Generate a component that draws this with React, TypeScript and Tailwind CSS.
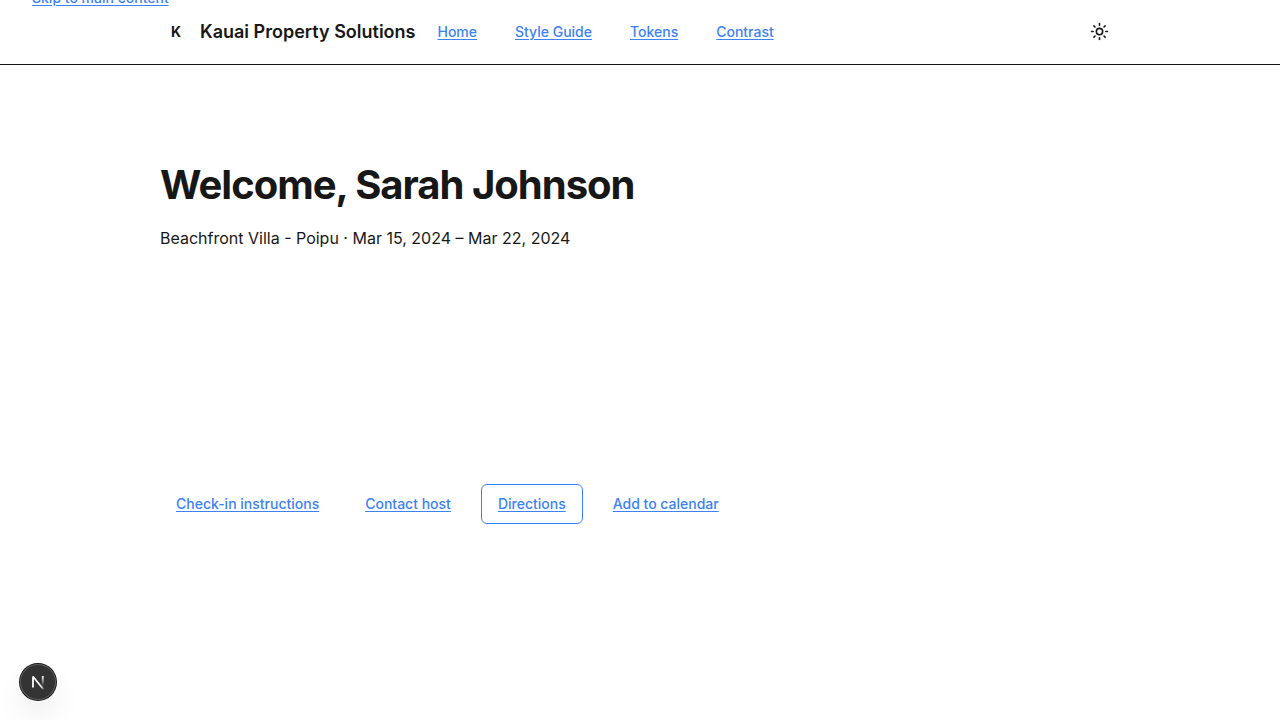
import { Sun } from "lucide-react";

const navLinks = ["Home", "Style Guide", "Tokens", "Contrast"];

const actions = [
  { label: "Check-in instructions", outlined: false },
  { label: "Contact host", outlined: false },
  { label: "Directions", outlined: true },
  { label: "Add to calendar", outlined: false },
];

function DevBadge() {
  return (
    <button
      type="button"
      aria-label="Open Next.js Dev Tools"
      className="fixed bottom-5 left-5 flex size-9 items-center justify-center rounded-full bg-[#333333] shadow-[0_0_0_1px_#171717,inset_0_0_0_1px_#5c5c5c,0_16px_32px_-8px_rgba(0,0,0,0.24)]"
    >
      <svg width="40" height="40" viewBox="0 0 40 40" fill="none" className="shrink-0">
        <defs>
          <linearGradient id="diagonal" x1="21" y1="21" x2="26" y2="28" gradientUnits="userSpaceOnUse">
            <stop stopColor="white" />
            <stop offset="0.6" stopColor="white" stopOpacity="0.8" />
            <stop offset="1" stopColor="white" stopOpacity="0" />
          </linearGradient>
          <linearGradient id="stem" x1="25" y1="14" x2="25" y2="24" gradientUnits="userSpaceOnUse">
            <stop stopColor="white" />
            <stop offset="1" stopColor="white" stopOpacity="0" />
          </linearGradient>
        </defs>
        <path d="M15 14.5L25.6 27.5" stroke="url(#diagonal)" strokeWidth="1.8" />
        <path d="M15 25.5V14.5" stroke="white" strokeWidth="1.8" />
        <path d="M24.8 14V24" stroke="url(#stem)" strokeWidth="1.8" />
      </svg>
    </button>
  );
}

export default function App() {
  return (
    <div className="min-h-screen bg-white font-['Inter','Liberation_Sans',sans-serif] text-[#171717]">
      <a
        href="#main"
        className="absolute -top-3 left-8 text-sm font-medium text-[#3b82f6] underline underline-offset-2"
      >
        Skip to main content
      </a>
      <header className="border-b border-[#171717]">
        <div className="mx-auto flex h-16 max-w-5xl items-center justify-between px-8">
          <div className="flex items-center gap-[22px]">
            <a href="#home" className="flex items-center gap-2">
              <span className="flex size-8 items-center justify-center text-sm font-bold">K</span>
              <span className="text-lg font-semibold">Kauai Property Solutions</span>
            </a>
            <nav aria-label="Main" className="flex items-center gap-[38px]">
              {navLinks.map((label) => (
                <a
                  key={label}
                  href="#nav"
                  className="text-sm font-medium text-[#3b82f6] underline underline-offset-2"
                >
                  {label}
                </a>
              ))}
            </nav>
          </div>
          <button
            type="button"
            aria-label="Toggle theme"
            className="flex size-10 items-center justify-center pr-px pb-px"
          >
            <Sun className="size-[19px]" strokeWidth={2} />
          </button>
        </div>
      </header>
      <main id="main" className="mx-auto max-w-5xl px-8 pt-24">
        <h1 className="text-[40px] leading-12 font-bold tracking-tight">Welcome, Sarah Johnson</h1>
        <p className="mt-4 text-base leading-[26px]">Beachfront Villa - Poipu · Mar 15, 2024 – Mar 22, 2024</p>
        <div className="mt-[233px] flex items-center gap-[14px]">
          {actions.map(({ label, outlined }) => (
            <a
              key={label}
              href="#action"
              className={
                outlined
                  ? "flex h-10 items-center rounded-md border border-[#3b82f6] px-4 text-sm font-medium text-[#3b82f6] underline underline-offset-2"
                  : "flex h-10 items-center px-4 text-sm font-medium text-[#3b82f6] underline underline-offset-2"
              }
            >
              {label}
            </a>
          ))}
        </div>
      </main>
      <DevBadge />
    </div>
  );
}
